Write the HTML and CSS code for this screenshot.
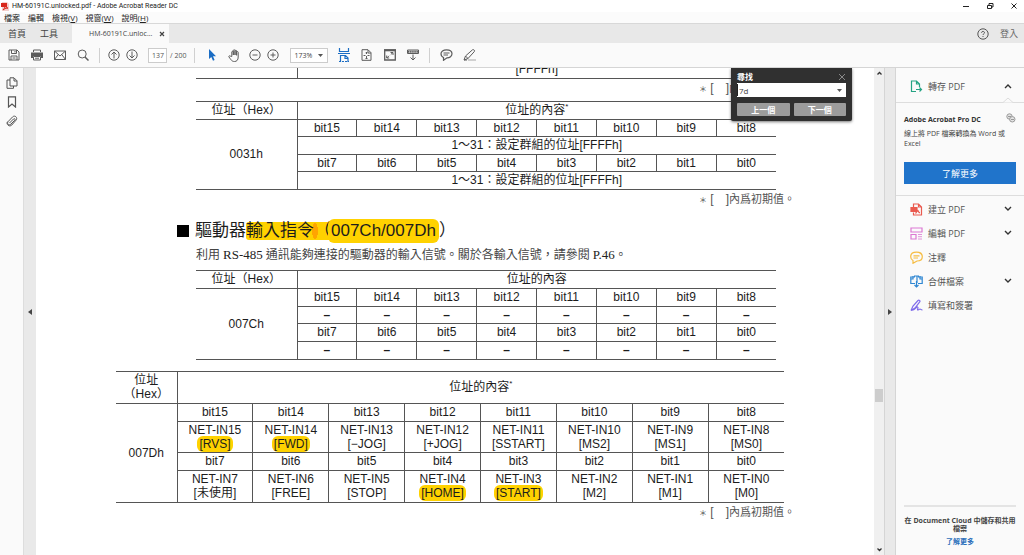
FILE: index.html
```html
<!DOCTYPE html>
<html lang="zh-Hant">
<head>
<meta charset="utf-8">
<title>HM-60191C.unlocked.pdf - Adobe Acrobat Reader DC</title>
<link rel="stylesheet" href="styles.css">
</head>
<body>
<header class="titlebar">
  <svg class="app-icon" width="8" height="9" viewBox="0 0 8 9"><path d="M1 0h5l2 2v7H1z" fill="#f3d0cc"/><path d="M0 1h6v4H0z" fill="#d8281c"/><path d="M2 8c2-2 2-4 2-5 0 2 1 3 3 3-2 0-4 1-5 2z" fill="none" stroke="#d8281c"/></svg>
  <span class="title">HM-60191C.unlocked.pdf - Adobe Acrobat Reader DC</span>
  <div class="window-buttons">
    <button aria-label="最小化"><svg width="8" height="8" viewBox="0 0 8 8"><path d="M1 4.5h6" stroke="#222"/></svg></button>
    <button aria-label="還原"><svg width="8" height="8" viewBox="0 0 8 8" fill="none" stroke="#222"><path d="M1.500 3.500h4v3h-4zM3 3V1.500h4v3.500H6"/></svg></button>
    <button aria-label="關閉"><svg width="8" height="8" viewBox="0 0 8 8"><path d="M1.500 1.500l5 5M6.500 1.500l-5 5" stroke="#222"/></svg></button>
  </div>
</header>
<nav class="menubar">
  <button>檔案</button><button>編輯</button><button>檢視(<u>V</u>)</button><button>視窗(<u>W</u>)</button><button>說明(<u>H</u>)</button>
</nav>
<div class="tabs">
  <button class="tab home">首頁</button>
  <button class="tab tools">工具</button>
  <div class="tab-active"><span>HM-60191C.unloc...</span><button class="tab-close" aria-label="關閉標籤"><svg width="6" height="6" viewBox="0 0 6 6"><path d="M1 1l4 4M5 1L1 5" stroke="#444" stroke-width="1.2"/></svg></button></div>
  <div class="account">
    <button aria-label="說明"><svg width="12" height="12" viewBox="0 0 12 12" fill="none" stroke="#555"><circle cx="6" cy="6" r="5.200"/><path d="M4.500 4.800C4.500 3 7.500 3 7.500 4.700 7.500 5.800 6 5.800 6 7M6 8v1"/></svg></button>
    <button class="login">登入</button>
  </div>
</div>
<div class="toolbar">
  <div class="group wide">
    <button aria-label="儲存"><svg width="12" height="12" viewBox="0 0 12 12" fill="none" stroke="#5c5c5c"><path d="M1 1h8l2 2v8H1zM3.500 1v3.500h5V1M3 11V7h6v4M7 2v1.500M4.500 9h3"/></svg></button>
    <button aria-label="列印"><svg width="12" height="12" viewBox="0 0 12 12" fill="none" stroke="#5c5c5c"><path d="M0 3.500h12v5.500h-2V7H2v2H0z" fill="#5c5c5c" stroke="none"/><path d="M2.500 3V1h7v2M2.500 7.500h7v3.500h-7zM4 9.200h4"/></svg></button>
    <button aria-label="電子郵件"><svg width="12" height="12" viewBox="0 0 12 12" fill="none" stroke="#5c5c5c"><path d="M.5 2h11v8.500H.5zM.5 2L6 7l5.500-5M.5 10.500l3.800-5M11.500 10.500l-3.800-5"/></svg></button>
    <button aria-label="搜尋"><svg width="12" height="12" viewBox="0 0 12 12" fill="none" stroke="#5c5c5c"><circle cx="5.200" cy="5" r="4"/><path d="M8 8l3.500 3.500" stroke-width="1.500"/></svg></button>
  </div>
  <span class="sep"></span>
  <div class="group">
    <button aria-label="上一頁"><svg width="12" height="12" viewBox="0 0 12 12" fill="none" stroke="#5c5c5c"><circle cx="6" cy="6" r="5.200"/><path d="M6 9.500v-6M3.500 5.500L6 3l2.500 2.500"/></svg></button>
    <button aria-label="下一頁"><svg width="12" height="12" viewBox="0 0 12 12" fill="none" stroke="#5c5c5c"><circle cx="6" cy="6" r="5.200"/><path d="M6 2.500v6M3.500 6.500L6 9l2.500-2.500"/></svg></button>
  </div>
  <label class="pager"><input class="page-input" value="137" aria-label="頁碼"><span>/ 200</span></label>
  <span class="sep"></span>
  <div class="group wide">
    <button aria-label="選取"><svg width="12" height="12" viewBox="0 0 12 12"><path d="M3 0v10l2.300-2 1.700 3.700 1.600-.8L7 7.300h3z" fill="#1b6dc4"/></svg></button>
    <button aria-label="手形工具"><svg width="13" height="13" viewBox="0 0 13 13" fill="none" stroke="#5c5c5c"><path d="M3.800 7.500V3c0-1 1.500-1 1.500 0v3V1.500c0-1 1.700-1 1.700 0V6 2c0-1 1.600-1 1.600 0v4.300-3c0-1 1.600-1 1.600 0V8c0 3-1.500 4.500-3.700 4.500-2.500 0-3-1-5.500-4.500-.7-1 .6-1.700 1.500-.8z"/></svg></button>
  </div>
  <div class="group zoom">
    <button aria-label="縮小"><svg width="12" height="12" viewBox="0 0 12 12" fill="none" stroke="#5c5c5c"><circle cx="6" cy="6" r="5.200"/><path d="M3.500 6h5"/></svg></button>
    <button aria-label="放大"><svg width="12" height="12" viewBox="0 0 12 12" fill="none" stroke="#5c5c5c"><circle cx="6" cy="6" r="5.200"/><path d="M3.500 6h5M6 3.500v5"/></svg></button>
  </div>
  <div class="zoom-box"><select aria-label="縮放比例"><option>173%</option></select><svg width="5" height="3" viewBox="0 0 5 3"><path d="M0 0h5L2.500 3z" fill="#555"/></svg></div>
  <div class="group wide">
    <button aria-label="符合寬度"><svg width="12" height="14" viewBox="0 0 12 14" fill="none" stroke="#1b6dc4" stroke-width="1.200"><path d="M1.500 0v3.500h9V0M0 5.500h12M2.500 14V7.500h5l2.500 2.500v4M7 7.500v3h3"/><path d="M1 13.500h10" stroke-dasharray="2 1"/></svg></button>
    <button aria-label="符合頁面"><svg width="11" height="12" viewBox="0 0 11 12" fill="none" stroke="#5c5c5c"><path d="M1 .7h6l3 3v7.600H1zM7 1v3h3M5.500 3v2M5.500 7v3M2.500 6.500h2M6.500 6.500h2M4.500 4.200l1 -1 1 1M4.500 9l1 1 1-1"/></svg></button>
    <button aria-label="全螢幕"><svg width="12" height="12" viewBox="0 0 12 12" fill="none" stroke="#5c5c5c"><path d="M.7 1h10.600v10H.7z" stroke-width="1.300"/><path d="M0 1.300h12" stroke-width="2"/><path d="M2.800 9L5 6.800M6.800 5.500L9 3.400M6.500 3.500H9V6M2.700 6.500V9h2.500"/></svg></button>
    <button aria-label="閱讀模式"><svg width="12" height="12" viewBox="0 0 12 12" fill="none" stroke="#5c5c5c"><path d="M.5 1h11v3.500H.5z"/><path d="M1 2.700h10" stroke-width="2" stroke-dasharray="1.500 .6"/><path d="M6 5.500V11M3.500 8.500L6 11l2.500-2.500"/></svg></button>
  </div>
  <span class="sep"></span>
  <div class="group wide">
    <button aria-label="註解"><svg width="13" height="12" viewBox="0 0 13 12" fill="none" stroke="#5c5c5c" stroke-width="1.200"><path d="M6.500.8c3.300 0 5.500 1.700 5.500 4s-2.200 4-5 4L3.500 11.300V8.500C1.800 7.800 1 6.500 1 4.800c0-2.300 2.200-4 5.500-4zM3.500 4h6M3.500 6h4.500"/></svg></button>
    <button aria-label="螢光筆"><svg width="13" height="12" viewBox="0 0 13 12" fill="none" stroke="#5c5c5c"><path d="M5 11h8" stroke="#d0d0d0" stroke-width="2"/><path d="M1 11l1.500-4L9.500.8c1-.8 2.700.8 1.800 1.800L5 9.500zM2.500 7L5 9.500M1 11h3"/></svg></button>
  </div>
</div>
<main class="workspace">
  <aside class="rail">
    <button aria-label="頁面縮圖"><svg width="12" height="12" viewBox="0 0 12 12" fill="none" stroke="#555"><path d="M4 .8h4l3 3V9H4zM8 1v3h3M4 3H1v8.300h6.500V9"/></svg></button>
    <button aria-label="書籤"><svg width="10" height="12" viewBox="0 0 10 12" fill="none" stroke="#555" stroke-width="1.200"><path d="M1.500.8h7V11L5 8l-3.500 3z"/></svg></button>
    <button aria-label="附件"><svg width="12" height="12" viewBox="0 0 12 12" fill="none" stroke="#555"><path d="M3.500 8l4-4c1-1 2.200.2 1.300 1.200L5 9c-2 2-4.600-.3-2.800-2.500l4.500-4.700c2.300-2 5.300 1 3.400 3.300L5.800 10c-2.500 2.500-6-.8-4.300-3.300"/></svg></button>
  </aside>
  <button class="strip strip-left" aria-label="展開導覽窗格"><svg width="4" height="6" viewBox="0 0 4 6"><path d="M4 0v6L0 3z" fill="#444"/></svg></button>
  <section class="document">
    <div class="sheet">
      <table class="grid narrow clipped">
        <colgroup><col class="addr"><col></colgroup>
        <tr><td></td><td>[FFFFh]</td></tr>
      </table>
      <p class="note"><small>＊</small> [　]<span>內爲初期值。</span></p>
      <table class="grid narrow">
        <colgroup><col class="addr"><col span="8"></colgroup>
        <tr><th>位址（Hex）</th><th colspan="8">位址的內容<sup>*</sup></th></tr>
        <tr class="short"><td rowspan="4">0031h</td><td>bit15</td><td>bit14</td><td>bit13</td><td>bit12</td><td>bit11</td><td>bit10</td><td>bit9</td><td>bit8</td></tr>
        <tr><td colspan="8">1～31：設定群組的位址[FFFFh]</td></tr>
        <tr class="short"><td>bit7</td><td>bit6</td><td>bit5</td><td>bit4</td><td>bit3</td><td>bit2</td><td>bit1</td><td>bit0</td></tr>
        <tr><td colspan="8">1～31：設定群組的位址[FFFFh]</td></tr>
      </table>
      <p class="note"><small>＊</small> [　]<span>內爲初期值。</span></p>
      <h2 class="heading"><span class="square"></span><span>驅動器<mark class="hl-flat">輸入指令（</mark><mark class="hl-round">007Ch/007Dh</mark>）</span></h2>
      <p class="lead">利用 <span>RS-485</span> 通訊能夠連接的驅動器的輸入信號。關於各輸入信號，請參閱 <span>P.46</span>。</p>
      <table class="grid narrow">
        <colgroup><col class="addr"><col span="8"></colgroup>
        <tr><th>位址（Hex）</th><th colspan="8">位址的內容</th></tr>
        <tr><td rowspan="4">007Ch</td><td>bit15</td><td>bit14</td><td>bit13</td><td>bit12</td><td>bit11</td><td>bit10</td><td>bit9</td><td>bit8</td></tr>
        <tr class="short dashes"><td>–</td><td>–</td><td>–</td><td>–</td><td>–</td><td>–</td><td>–</td><td>–</td></tr>
        <tr><td>bit7</td><td>bit6</td><td>bit5</td><td>bit4</td><td>bit3</td><td>bit2</td><td>bit1</td><td>bit0</td></tr>
        <tr class="dashes"><td>–</td><td>–</td><td>–</td><td>–</td><td>–</td><td>–</td><td>–</td><td>–</td></tr>
      </table>
      <table class="grid broad">
        <colgroup><col class="addr"><col span="8"></colgroup>
        <tr class="tall"><th>位址<br>（Hex）</th><th colspan="8">位址的內容<sup>*</sup></th></tr>
        <tr><td rowspan="4">007Dh</td><td>bit15</td><td>bit14</td><td>bit13</td><td>bit12</td><td>bit11</td><td>bit10</td><td>bit9</td><td>bit8</td></tr>
        <tr class="double"><td>NET-IN15<br><mark>[RVS]</mark></td><td>NET-IN14<br><mark>[FWD]</mark></td><td>NET-IN13<br>[−JOG]</td><td>NET-IN12<br>[+JOG]</td><td>NET-IN11<br>[SSTART]</td><td>NET-IN10<br>[MS2]</td><td>NET-IN9<br>[MS1]</td><td>NET-IN8<br>[MS0]</td></tr>
        <tr><td>bit7</td><td>bit6</td><td>bit5</td><td>bit4</td><td>bit3</td><td>bit2</td><td>bit1</td><td>bit0</td></tr>
        <tr class="tall"><td>NET-IN7<br>[未使用]</td><td>NET-IN6<br>[FREE]</td><td>NET-IN5<br>[STOP]</td><td>NET-IN4<br><mark>[HOME]</mark></td><td>NET-IN3<br><mark>[START]</mark></td><td>NET-IN2<br>[M2]</td><td>NET-IN1<br>[M1]</td><td>NET-IN0<br>[M0]</td></tr>
      </table>
      <p class="note"><small>＊</small> [　]<span>內爲初期值。</span></p>
    </div>
    <form class="find" onsubmit="return false">
      <div class="find-head"><label for="find-text">尋找</label><button type="button" class="find-close" aria-label="關閉"><svg width="8" height="8" viewBox="0 0 8 8"><path d="M1 1l6 6M7 1L1 7" stroke="#888"/></svg></button></div>
      <div class="find-field"><input id="find-text" value="7d"><svg width="5" height="3" viewBox="0 0 5 3"><path d="M0 0h5L2.500 3z" fill="#555"/></svg></div>
      <div class="find-actions"><button type="button">上一個</button><button type="button">下一個</button></div>
    </form>
  </section>
  <div class="scrollbar">
    <button aria-label="向上捲動"><svg width="5" height="4" viewBox="0 0 5 4"><path d="M.5 3.500l2-2 2 2" fill="none" stroke="#333" stroke-width="1.300"/></svg></button>
    <span class="before"></span><span class="thumb"></span><span class="after"></span>
    <button aria-label="向下捲動"><svg width="5" height="4" viewBox="0 0 5 4"><path d="M.5 .5l2 2 2-2" fill="none" stroke="#333" stroke-width="1.300"/></svg></button>
  </div>
  <button class="strip strip-right" aria-label="收合工具窗格"><svg width="4" height="6" viewBox="0 0 4 6"><path d="M0 0v6l4-3z" fill="#444"/></svg></button>
  <aside class="panel">
    <button class="tool export"><svg width="13" height="13" viewBox="0 0 13 13" fill="none" stroke="#25a383" stroke-width="1.200"><path d="M6 11.500H1.500V1h5l3 3v3M6.500 1v3h3M6 9.500h5.500M9.500 7.500l2 2-2 2"/></svg><span>轉存 PDF</span><svg class="chev" width="8" height="6" viewBox="0 0 8 6"><path d="M1 5l3-3 3 3" fill="none" stroke="#333" stroke-width="1.400"/></svg></button>
    <svg class="notch" width="12" height="6" viewBox="0 0 12 6"><path d="M0 5.500h1L6 1l5 4.500h1" fill="#fafafa" stroke="#ddd"/></svg>
    <div class="promo">
      <div class="promo-head"><h3>Adobe Acrobat Pro DC</h3><svg width="10" height="10" viewBox="0 0 10 10" fill="#e4e4e4" stroke="#999"><circle cx="3.500" cy="3.500" r="2.700"/><path d="M2 3.500h3"/><circle cx="6.300" cy="6.300" r="2.700"/><path d="M5 6.500h3"/></svg></div>
      <p>線上將 PDF 檔案轉換為 Word 或 Excel</p>
      <button class="cta">了解更多</button>
    </div>
    <div class="tools-list">
      <button class="tool"><svg width="13" height="13" viewBox="0 0 13 13" fill="none" stroke="#ea5a4f" stroke-width="1.200"><path d="M3.500 4V1h5l3 3v8h-8V9.500M8.500 1v3h3"/><path d="M1 4.500h6v4H1z" fill="#ea5a4f"/><path d="M5.500 10.500c2-3 2-4 3-2s1 1 1.500 1"/></svg><span>建立 PDF</span><svg class="chev" width="8" height="6" viewBox="0 0 8 6"><path d="M1 1l3 3 3-3" fill="none" stroke="#333" stroke-width="1.400"/></svg></button>
      <button class="tool"><svg width="13" height="13" viewBox="0 0 13 13" fill="none" stroke="#dc78d3" stroke-width="1.200"><path d="M1 1h11v4H1zM1 7.500h5V12H1z"/><path d="M8 7.500h4M8 9.700h4M8 12h4" stroke-width=".8"/></svg><span>編輯 PDF</span><svg class="chev" width="8" height="6" viewBox="0 0 8 6"><path d="M1 1l3 3 3-3" fill="none" stroke="#333" stroke-width="1.400"/></svg></button>
      <button class="tool"><svg width="13" height="13" viewBox="0 0 13 13" fill="none" stroke="#f6bd43" stroke-width="1.200"><path d="M6.500 1.200C10 1.200 12.300 3 12.300 5.700S10 10 7 10L3 12.300V9.500C1.500 8.700.7 7.300.7 5.700c0-2.700 2.300-4.500 5.800-4.500zM3.500 4.800h6M3.500 7h4.500"/></svg><span>注釋</span></button>
      <button class="tool"><svg width="13" height="13" viewBox="0 0 13 13" fill="none" stroke="#2e86d2" stroke-width="1.200"><path d="M5 8.500H.8V2H5M8 8.500h4.200V2H8M4 1h3v7M9 1H7M3 1v3H1M10 1v3h2M6.500 6v6M4.500 10l2 2 2-2"/></svg><span>合併檔案</span><svg class="chev" width="8" height="6" viewBox="0 0 8 6"><path d="M1 1l3 3 3-3" fill="none" stroke="#333" stroke-width="1.400"/></svg></button>
      <button class="tool"><svg width="13" height="13" viewBox="0 0 13 13" fill="none" stroke="#7f6bea" stroke-width="1.200"><path d="M1 11.500L3 7l5-5.500c1-1 2.500.3 1.700 1.300L5 9 1 11.500c5-.5 5-4 6.500-3.500s-1 3 .5 3 1-1 2-1 .5 1 2.500 1"/></svg><span>填寫和簽署</span></button>
    </div>
    <footer class="cloud"><p>在 Document Cloud 中儲存和共用檔案</p><a href="#">了解更多</a></footer>
  </aside>
</main>
</body>
</html>
```

FILE: styles.css
```css
* { box-sizing: border-box; }
body {
  margin: 0;
  height: 100vh;
  display: flex;
  flex-direction: column;
  overflow: hidden;
  background: #fff;
  color: #444;
  font-family: "Open Sans", "Noto Sans CJK TC", sans-serif;
  font-size: 9px;
}
button, input, select { font: inherit; color: inherit; }
button {
  padding: 0;
  border: 0;
  background: none;
  display: flex;
  align-items: center;
  justify-content: center;
}
svg { display: block; flex: none; }
h2, h3, p { margin: 0; }

.titlebar { display: flex; align-items: center; height: 12px; padding-left: 1px; gap: 3px; }
.title { font-family: Roboto, "Noto Sans CJK TC", sans-serif; font-size: 7px; line-height: 12px; color: #222; }
.window-buttons { margin-left: auto; display: flex; padding-right: 6px; gap: 16px; }
.menubar { display: flex; align-items: center; height: 11px; padding-left: 4px; gap: 8px; background: #fbfbfb; color: #222; font-size: 8px; line-height: 11px; }
.tabs { display: flex; height: 20px; background: #e8e8e8; border-top: 1px solid #d8d8d8; }
.tab { padding: 0 7px 0 8px; }
.tab.tools { padding: 0 14px 0 7px; }
.tab-active { display: flex; align-items: center; justify-content: space-between; width: 97px; padding: 0 4px 0 17px; background: #fafafa; font-size: 7px; }
.account { display: flex; align-items: center; gap: 11px; margin-left: auto; padding-right: 6px; color: #666; }

.toolbar { display: flex; align-items: center; height: 25px; padding-left: 2px; background: #fafafa; border-bottom: 1px solid #d5d5d5; }
.group { display: flex; }
.group button { width: 18px; height: 20px; }
.group.wide button { width: 23px; }
.group.zoom { padding-right: 8px; }
.sep { width: 1px; height: 15px; margin: 0 5px; background: #d0d0d0; }
.pager { display: flex; align-items: center; gap: 3px; margin: 0 3px 0 7px; font-size: 7px; color: #555; }
.page-input { width: 19px; height: 15px; padding: 0 0 0 3px; border: 1px solid #ccc; background: #fff; }
.zoom-box { display: flex; align-items: center; width: 38px; height: 15px; margin-right: 4px; padding-right: 4px; border: 1px solid #ccc; background: #fff; font-size: 7px; }
.zoom-box select { flex: 1; min-width: 0; height: 13px; padding: 0 0 0 3px; border: 0; appearance: none; background: none; }

.workspace { display: flex; flex: 1; min-height: 0; }
.rail { display: flex; flex-direction: column; align-items: center; gap: 7px; width: 24px; padding-top: 9px; background: #fafafa; border-right: 1px solid #ddd; }
.rail button { width: 20px; height: 12px; }
.strip { flex: none; background: #e9e9e9; }
.strip-left { width: 12px; }
.strip-right { width: 11px; border-right: 1px solid #d5d5d5; }
.document { position: relative; flex: 1; min-width: 0; overflow: hidden; background: #fff; }
.scrollbar { display: flex; flex-direction: column; align-items: center; width: 11px; background: #f0f0f0; border-right: 1px solid #d5d5d5; }
.scrollbar button { width: 10px; height: 10px; }
.before { flex: 311; }
.thumb { width: 8px; height: 13px; background: #cdcdcd; }
.after { flex: 143; }

.sheet {
  margin-top: -8px;
  padding: 0 79px 0 80px;
  color: #1c1c1c;
  font-family: "Liberation Sans", "Noto Sans CJK TC", sans-serif;
  font-size: 12px;
}
.grid { table-layout: fixed; border-collapse: collapse; line-height: 14px; text-align: center; }
.grid td, .grid th { padding: 0; border: 1px solid #555; font-weight: 400; }
.grid tr > :first-child[rowspan], .grid tr:first-child > :first-child { border-left: 0; }
.grid tr > :last-child { border-right: 0; }
.grid tr { height: 18px; }
.grid tr.short { height: 17px; }
.grid tr.double { height: 31px; }
.grid tr.tall { height: 32px; }
.grid .dashes td { font-weight: 700; }
.grid sup { font-size: 8px; line-height: 0; }
.narrow { width: calc(100% - 99px); margin-left: 80px; }
.narrow .addr { width: 101px; }
.broad { width: calc(100% - 11px); margin-top: 11px; }
.broad .addr { width: 61px; }
.clipped td { border-top: 0; }
.note { height: 22px; line-height: 18px; text-align: right; color: #555; }
.note span { font-size: 11px; }
.note small { font-size: 8px; }
.heading { display: flex; align-items: center; gap: 6px; height: 24px; margin: 7px 0 3px 61px; font-size: 17px; line-height: 24px; font-weight: 400; }
.square { width: 12px; height: 12px; background: #000; }
mark { color: inherit; background: #ffd200; border-radius: 6px; padding: 1px 2px; margin: 0 -2px; }
.heading mark { margin: 0; padding: 0; }
.heading .hl-flat { display: inline-block; height: 18px; line-height: 18px; border-radius: 3px 0 0 3px; background: radial-gradient(ellipse 3px 8px at 69px 9px, #ffa400 95%, transparent) #ffd200; }
.heading .hl-round { display: inline-block; line-height: 24px; margin-left: -3px; padding: 0 3px; }
.lead { height: 24px; margin-left: 80px; line-height: 18px; color: #444; font-family: "Liberation Serif", "Noto Sans CJK TC", serif; white-space: nowrap; }
.lead span { font-size: 13px; color: #222; }

.find { position: absolute; top: 0; right: 22px; width: 121px; padding: 2px 6px 5px; border-radius: 0 0 2px 2px; background: #303030; box-shadow: 0 1px 3px #0008; color: #fff; font-size: 8px; font-weight: 700; }
.find-head { display: flex; align-items: center; justify-content: space-between; height: 13px; }
.find-field { display: flex; align-items: center; height: 14px; padding-right: 4px; background: #fff; color: #444; font-weight: 400; }
.find-field input { flex: 1; min-width: 0; height: 12px; padding: 0 1px; border: 0; outline: 0; border-left: 1px solid #222; }
.find-actions { display: flex; gap: 4px; padding-top: 6px; }
.find-actions button { flex: 1; height: 13px; border-radius: 1px; background: #9c9c9c; }

.panel { position: relative; display: flex; flex-direction: column; width: 128px; background: #fafafa; }
.tool { width: 100%; height: 24px; padding: 0 12px 0 14px; gap: 5px; justify-content: flex-start; color: #555; }
.tool .chev { margin-left: auto; }
.tool.export { flex: none; height: 35px; padding-top: 2px; border-bottom: 1px solid #ddd; }
.notch { position: absolute; top: 29px; right: 10px; }
.promo { padding: 10px 8px 11px; border-bottom: 1px solid #ddd; }
.promo-head { display: flex; justify-content: space-between; height: 16px; }
.promo h3 { font-size: 7px; line-height: 14px; color: #333; }
.promo p { font-size: 7px; line-height: 10px; }
.cta { width: 100%; height: 22px; margin-top: 13px; background: #2074cb; color: #fff; }
.tools-list { padding-top: 1px; }
.cloud { margin: auto 8px 9px; padding-top: 10px; border-top: 2px solid #e4e4e4; text-align: center; font-size: 7px; line-height: 8px; font-weight: 700; }
.cloud a { display: block; margin-top: 5px; color: #2a6ebb; text-decoration: none; }
```
